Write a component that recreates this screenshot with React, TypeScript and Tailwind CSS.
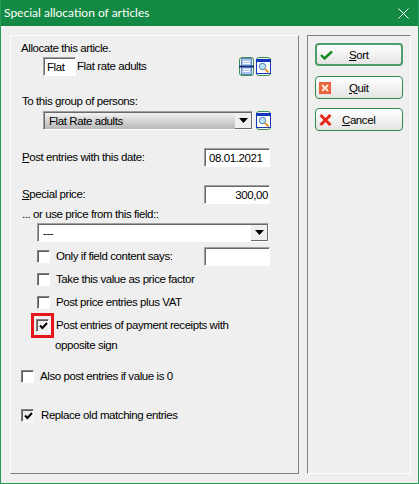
import type { ReactNode } from 'react'

const label = "text-[11.5px] tracking-[-0.42px] leading-[15px] text-black whitespace-nowrap"

function Sunken({ className, children }: { className: string; children?: ReactNode }) {
  return (
    <div className={`border border-r-white border-b-white border-t-[#a0a0a0] border-l-[#a0a0a0] shrink-0 ${className}`}>
      <div className="h-full w-full border-t border-l border-t-[#696969] border-l-[#696969] bg-white flex items-center overflow-hidden">
        {children}
      </div>
    </div>
  )
}

function ArrowButton() {
  return (
    <div className="ml-auto h-full w-[17px] bg-[#f0f0f0] border-r border-b border-r-[#696969] border-b-[#696969] flex items-center justify-center shrink-0">
      <svg width="9" height="5" viewBox="0 0 9 5"><path d="M0 0h9L4.5 5z" fill="#000" /></svg>
    </div>
  )
}

function Checkbox({ checked }: { checked?: boolean }) {
  return (
    <div className="w-[13px] h-[13px] border border-r-white border-b-white border-t-[#808080] border-l-[#808080] shrink-0">
      <div className={`h-full w-full border-t border-l border-t-[#5a5a5a] border-l-[#5a5a5a] flex items-center justify-center ${checked ? 'bg-[#f0f0f0]' : 'bg-white'}`}>
        {checked && (
          <svg width="9" height="8" viewBox="0 0 9 8">
            <path d="M1 3.5 3.4 6 8 1" fill="none" stroke="#000" strokeWidth="2" />
          </svg>
        )}
      </div>
    </div>
  )
}

function SearchIcon() {
  return (
    <div className="w-[15px] h-[19px] rounded-[3px] border border-[#3f8f57] bg-[#f4f4f4] flex items-center justify-center shrink-0">
      <svg width="15" height="15" viewBox="0 0 15 15" className="shrink-0">
        <rect x="0.5" y="0.5" width="14" height="14" fill="#fff" stroke="#1038b8" />
        <rect x="0" y="0" width="15" height="3" fill="#1038b8" />
        <circle cx="6.5" cy="7.5" r="3.2" fill="#bfe3f8" stroke="#4d7fb0" />
        <path d="M9 10l3.5 3.5" stroke="#e8962e" strokeWidth="2" />
      </svg>
    </div>
  )
}

function SplitIcon() {
  return (
    <div className="w-[15px] h-[19px] rounded-[3px] border border-[#3f8f57] bg-[#f4f4f4] flex items-center justify-center shrink-0">
      <svg width="15" height="17" viewBox="0 0 15 17" className="shrink-0">
        <rect x="2.5" y="0.5" width="10" height="16" fill="#a9c5ea" stroke="#5c86bd" />
        <path d="M4 3.5h7M4 5.5h7M4 11.5h7M4 13.5h7" stroke="#ffffff" />
        <path d="M0 8.5h15" stroke="#12307f" strokeWidth="2" />
      </svg>
    </div>
  )
}

function ActionButton({ icon, textLeft, isDefault, className = '', children }: { icon: ReactNode; textLeft: string; isDefault?: boolean; className?: string; children: ReactNode }) {
  return (
    <button className={`relative w-[88px] h-[23px] rounded-[4px] bg-gradient-to-b from-white to-[#e4e4e4] flex items-center text-[12px] text-black shrink-0 ${isDefault ? 'border-2 border-[#4f9d68]' : 'border border-[#2f8a4c]'} ${className}`}>
      <span className={`absolute top-1/2 -translate-y-1/2 flex ${isDefault ? 'left-[3px]' : 'left-[3px]'}`}>{icon}</span>
      <span className={textLeft}>{children}</span>
    </button>
  )
}

function Row({ h, className = '', children }: { h: string; className?: string; children: ReactNode }) {
  return <div className={`flex items-center shrink-0 ${h} ${className}`}>{children}</div>
}

export default function App() {
  return (
    <div className="w-[419px] h-[484px] bg-[#efefef] flex flex-col overflow-hidden border-x border-b border-[#2b9a58] font-['Liberation_Sans',sans-serif]">
      {/* タイトルバー */}
      <div className="h-[26px] -mx-px bg-[#138a43] flex items-center justify-between shrink-0 pl-[4px] pr-[10px]">
        <span className="text-[12px] text-white font-['Lato',sans-serif]">Special allocation of articles</span>
        <svg width="11" height="11" viewBox="0 0 11 11">
          <path d="M.5.5l10 10M10.5.5l-10 10" stroke="#fff" strokeWidth="1" />
        </svg>
      </div>

      <div className="flex pt-[9px] pl-[9px] h-[447px]">
        {/* 左パネル */}
        <div className="w-[289px] h-[439px] border border-t-white border-l-white border-r-[#808080] border-b-[#808080] pl-[10px] flex flex-col">
          <Row h="h-[18px]" className="mt-[3px]"><span className={label}>Allocate this article.</span></Row>
          <Row h="h-[19px]" className="pl-[22px] pr-[27px]">
            <Sunken className="w-[33px] h-[19px]"><span className={`${label} pl-[2px]`}>Flat</span></Sunken>
            <span className={`${label} ml-[1px]`}>Flat rate adults</span>
            <div className="ml-auto flex gap-[2px]"><SplitIcon /><SearchIcon /></div>
          </Row>
          <Row h="h-[20px]" className="mt-[15px]"><span className={`${label} pl-px`}>To this group of persons:</span></Row>
          <Row h="h-[19px]" className="pl-[22px]">
            <Sunken className="w-[210px] h-[19px]">
              <div className="h-full w-full flex items-center bg-gradient-to-b from-[#f2f2f2] to-[#b8b8b8]">
                <span className={`${label} pl-[4px]`}>Flat Rate adults</span>
                <ArrowButton />
              </div>
            </Sunken>
            <div className="ml-[3px]"><SearchIcon /></div>
          </Row>
          <Row h="h-[19px]" className="mt-[18px] justify-between pr-[28px]">
            <span className={`${label} pl-px`}><u>P</u>ost entries with this date:</span>
            <Sunken className="w-[66px] h-[19px]"><span className={`${label} pl-[3px]`}>08.01.2021</span></Sunken>
          </Row>
          <Row h="h-[19px]" className="mt-[18px] justify-between pr-[28px]">
            <span className={`${label} pl-px`}><u>S</u>pecial price:</span>
            <Sunken className="w-[66px] h-[19px]"><span className={`${label} ml-auto pr-px`}>300,00</span></Sunken>
          </Row>
          <Row h="h-[19px]" className="pt-[2px]"><span className={`${label} pl-px`}>... or use price from this field::</span></Row>
          <Row h="h-[19px]" className="pl-[16px]">
            <Sunken className="w-[232px] h-[19px]">
              <span className={`${label} pl-[4px]`}>---</span>
              <ArrowButton />
            </Sunken>
          </Row>
          <Row h="h-[19px]" className="pl-[16px] mt-[5px] pr-[28px]">
            <Checkbox />
            <span className={`${label} ml-[6px]`}>Only if field content says:</span>
            <Sunken className="w-[66px] h-[19px] ml-auto" />
          </Row>
          <Row h="h-[19px]" className="pl-[16px] mt-[4px]">
            <Checkbox /><span className={`${label} ml-[6px]`}>Take this value as price factor</span>
          </Row>
          <Row h="h-[19px]" className="pl-[16px] mt-[4px]">
            <Checkbox /><span className={`${label} ml-[6px]`}>Post price entries plus VAT</span>
          </Row>
          <Row h="h-[25px]" className="pl-[10px] mt-[1px]">
            <div className="w-[23px] h-[25px] border-[3px] border-[#e8141c] flex items-center justify-center shrink-0">
              <Checkbox checked />
            </div>
            <span className={`${label} ml-[2px]`}>Post entries of payment receipts with</span>
          </Row>
          <Row h="h-[15px]" className="pl-[34px]"><span className={label}>opposite sign</span></Row>
          <Row h="h-[19px]" className="mt-[14px]">
            <Checkbox /><span className={`${label} ml-[6px]`}>Also post entries if value is 0</span>
          </Row>
          <Row h="h-[19px]" className="mt-[20px]">
            <Checkbox checked /><span className={`${label} ml-[7px]`}>Replace old matching entries</span>
          </Row>
        </div>

        {/* 右パネル */}
        <div className="ml-[8px] w-[104px] h-[439px] border border-t-[#808080] border-l-[#808080] border-r-white border-b-white pl-[7px] pt-[7px] flex flex-col gap-[9px]">
          <ActionButton
            isDefault
            textLeft="ml-[32px]"
            icon={<svg width="13" height="10" viewBox="0 0 13 10"><path d="M1 5 4.5 8.5 12 1.5" fill="none" stroke="#118a1e" strokeWidth="2.4" /></svg>}
          >
            <span className={label}><u>S</u>ort</span>
          </ActionButton>
          <ActionButton
            className="mt-px"
            textLeft="ml-[33px]"
            icon={
              <svg width="12" height="12" viewBox="0 0 12 12">
                <rect width="12" height="12" fill="#e8623c" />
                <path d="M3 3l6 6M9 3l-6 6" stroke="#ffe8d8" strokeWidth="2" />
              </svg>
            }
          >
            <span className={label}><u>Q</u>uit</span>
          </ActionButton>
          <ActionButton
            textLeft="ml-[26px]"
            icon={<svg width="13" height="13" viewBox="0 0 13 13"><path d="M1.5 1.5l10 10M11.5 1.5l-10 10" stroke="#e8261c" strokeWidth="3" /></svg>}
          >
            <span className={label}><u>C</u>ancel</span>
          </ActionButton>
        </div>
      </div>
    </div>
  )
}
